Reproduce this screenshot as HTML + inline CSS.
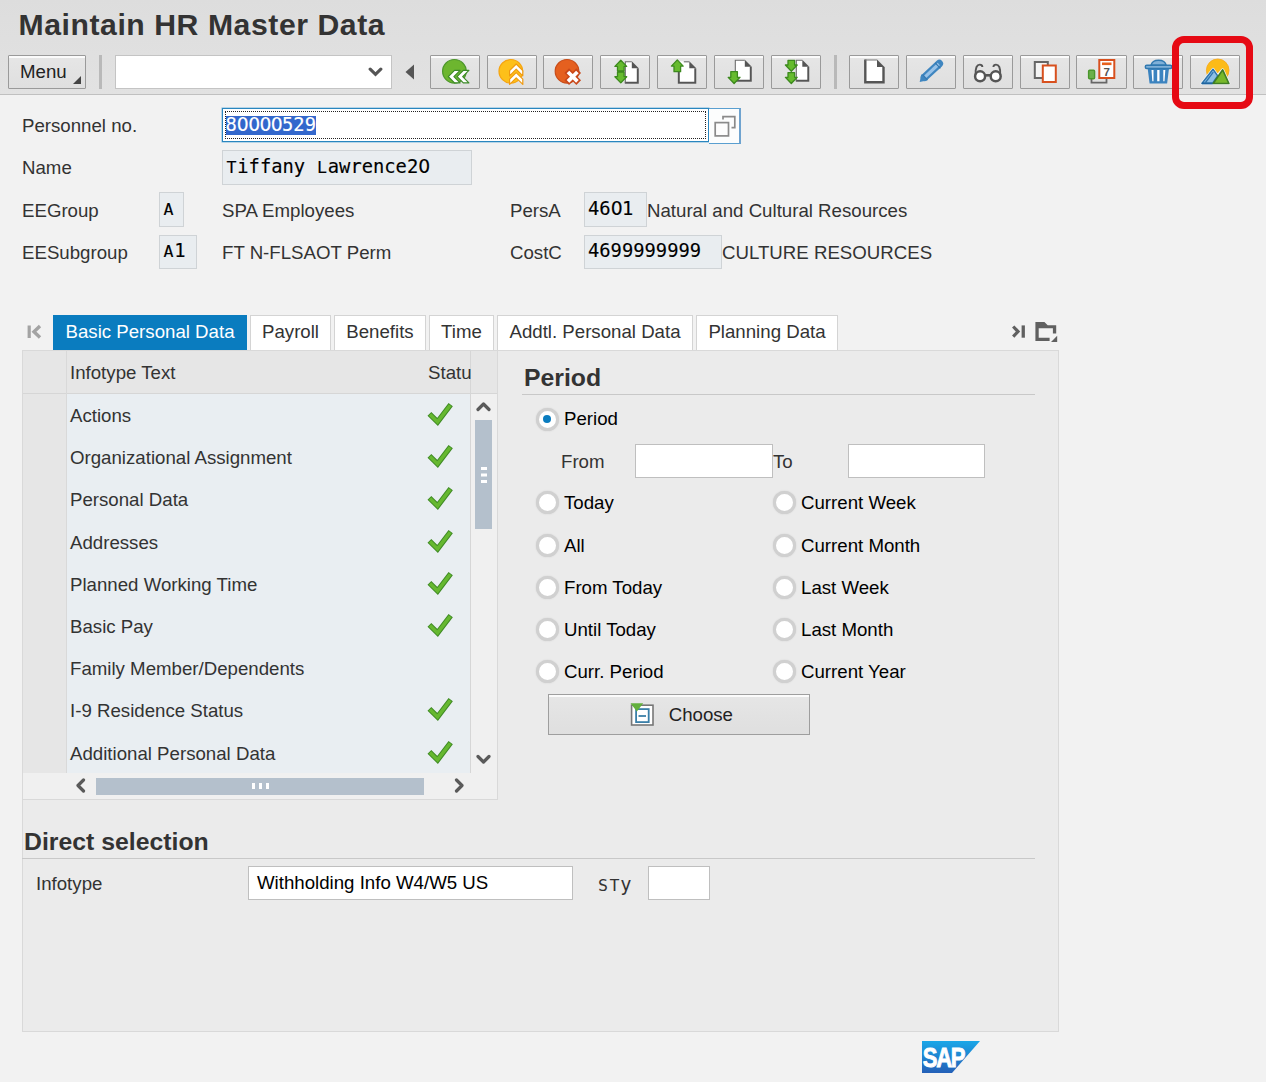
<!DOCTYPE html>
<html lang="en">
<head>
<meta charset="utf-8">
<title>Maintain HR Master Data</title>
<style>
*{box-sizing:border-box;margin:0;padding:0}
html,body{width:1266px;height:1082px;overflow:hidden}
body{background:#f2f2f2;font-family:"Liberation Sans",Arial,sans-serif;font-size:18.67px;color:#333;position:relative}
.abs{position:absolute}
#hdr{left:0;top:0;width:1266px;height:95px;background:linear-gradient(#dddddd,#e2e2e2);border-bottom:1px solid #c0c0c0}
#title{left:18.5px;top:7px;letter-spacing:0.55px;font-size:30.2px;font-weight:bold;color:#333;white-space:nowrap;line-height:36px}
.tb{position:absolute;top:55px;height:34px;width:50px;border:1px solid #9a9a9a;background:linear-gradient(#e6e6e6,#dfdfdf);border-radius:1px;box-shadow:inset 0 2px 0 #fbfbfb}
.tb svg{position:absolute;left:0;top:0;width:48px;height:32px}
.sep{position:absolute;top:55px;height:34px;width:3px;background:#b9b9b9}
.lbl{position:absolute;white-space:nowrap;line-height:22px;color:#333}
.mono{font-family:"DejaVu Sans Mono","Liberation Mono",monospace;font-size:18.8px;color:#000;-webkit-text-stroke:0.14px currentColor}
.z{font-family:"DejaVu Sans",sans-serif;letter-spacing:-0.64px}
.c{font-size:16.6px;margin-left:.6px;letter-spacing:.72px}
.ro{position:absolute;background:#e9edf0;border:1px solid #cfd3d6;white-space:nowrap;overflow:hidden}
.ro>span{position:absolute;left:4px;top:3px;line-height:22px}
.inp{position:absolute;background:#fff;border:1px solid #bfbfbf}
.tab{position:absolute;top:315px;height:35px;background:#fff;border:1px solid #d4d4d4;border-bottom:none;text-align:center;line-height:31px;color:#333;white-space:nowrap}
.tab.act{background:#0a7cbf;border-color:#0a7cbf;color:#fff}
.row{position:absolute;margin-top:1px;left:70px;white-space:nowrap;line-height:22px;color:#333}
.chk{position:absolute;left:426px;width:30px;height:26px}
.radio{position:absolute;width:23px;height:23px;margin:-0.5px 0 0 -0.5px;border-radius:50%;background:#fff;border:3px solid #d0d0d0;box-shadow:0 0 1.5px #c8c8c8}
.rl{position:absolute;margin-top:1px;white-space:nowrap;line-height:22px;color:#000}
h2{position:absolute;margin-top:1px;font-size:24.8px;font-weight:bold;color:#333;line-height:28px;white-space:nowrap}
#fields .lbl,#table .lbl,#period .lbl{margin-top:1px}
</style>
</head>
<body>
<div id="hdr" class="abs"></div>
<div id="title" class="abs">Maintain HR Master Data</div>

<!-- toolbar -->
<div id="toolbar">
<div class="tb" style="left:8px;width:78px"><span class="abs" style="left:11px;top:5px;line-height:22px;color:#222;font-size:18.67px">Menu</span><svg style="left:63px;top:19px;width:10px;height:10px" viewBox="0 0 10 10"><path d="M9 1V9H1Z" fill="#444"/></svg></div>
<div class="sep" style="left:99px"></div>
<div class="inp" style="left:115px;top:55px;width:277px;height:34px;border-color:#c4c4c4"><svg class="abs" style="left:252px;top:11px;width:15px;height:10px" viewBox="0 0 15 10"><path d="M2.200 2.200L7.500 7.300L12.800 2.200" fill="none" stroke="#555" stroke-width="3.200" stroke-linecap="round"/></svg></div>
<svg class="abs" style="left:404px;top:63px;width:11px;height:18px" viewBox="0 0 11 18"><path d="M10 1.500V16.500L1.500 9Z" fill="#555"/></svg>

<div class="tb" style="left:430px"><svg viewBox="0 0 48 32"><circle cx="23.4" cy="15.3" r="11.8" fill="#6db62f" stroke="#4d962c" stroke-width="1.2"/><path d="M17.3 20.6L23.5 14.400000000000002H29.1L22.9 20.6L29.1 26.8H23.5ZM26.1 20.6L32.300000000000004 14.400000000000002H37.900000000000006L31.700000000000003 20.6L37.900000000000006 26.8H32.300000000000004Z" fill="#fff" stroke="#3d8a28" stroke-width="1.2" stroke-linejoin="round"/></svg></div>
<div class="tb" style="left:487px"><svg viewBox="0 0 48 32"><circle cx="22.8" cy="15.3" r="11.8" fill="#fdc01a" stroke="#f5a411" stroke-width="1.2"/><path d="M28.2 8.0L34.8 14.6V19.8L28.2 13.2L21.6 19.8V14.6ZM28.2 16.6L34.8 23.200000000000003V28.400000000000002L28.2 21.8L21.6 28.400000000000002V23.200000000000003Z" fill="#fff" stroke="#f09a10" stroke-width="1.2" stroke-linejoin="round"/></svg></div>
<div class="tb" style="left:543px"><svg viewBox="0 0 48 32"><circle cx="23" cy="15.300" r="11.800" fill="#e5601f" stroke="#c84c18" stroke-width="1.200"/><path d="M22.700 14.700L34.700 26.700M34.700 14.700L22.700 26.700" fill="none" stroke="#c9481a" stroke-width="6.600"/><path d="M24 16L33.400 25.400M33.400 16L24 25.400" fill="none" stroke="#fff" stroke-width="3.700"/></svg></div>
<div class="tb" style="left:600px"><svg viewBox="0 0 48 32"><g transform="translate(0.800 0.300)"><path d="M23 5H30L37 12V27.5H23Z" fill="#fff"/><path d="M30 5L37 12H30Z" fill="#555"/><path d="M36 12V26.5H23" fill="none" stroke="#555" stroke-width="2"/><path d="M23.5 26.5V5.5H30" fill="none" stroke="#6a6a6a" stroke-width="1.1"/><path d="M19 3.9L24.9 10.1H22.3V14.7H15.7V10.1H13.1ZM19 26.6L24.9 20.400000000000002H22.3V15.800000000000002H15.7V20.400000000000002H13.1Z" fill="#66bb2e" stroke="#3d8a1e" stroke-width="1.3" stroke-linejoin="round"/></g></svg></div>
<div class="tb" style="left:657px"><svg viewBox="0 0 48 32"><g transform="translate(0.800 0.300)"><path d="M19 5H30.5L37.5 12V27.5H19Z" fill="#fff"/><path d="M30.5 5L37.5 12H30.5Z" fill="#555"/><path d="M36.5 12V26.5H20V14" fill="none" stroke="#555" stroke-width="2"/><path d="M25 5.5H30.5" fill="none" stroke="#6a6a6a" stroke-width="1.1"/><path d="M18.5 3.6L24.4 9.8H21.8V15.4H15.2V9.8H12.6Z" fill="#66bb2e" stroke="#3d8a1e" stroke-width="1.3" stroke-linejoin="round"/></g></svg></div>
<div class="tb" style="left:714px"><svg viewBox="0 0 48 32"><g transform="translate(0.800 0.300)"><path d="M19 3.5H29L36 10.5V25.5H19Z" fill="#fff"/><path d="M29 3.5L36 10.5H29Z" fill="#555"/><path d="M35 10.5V24.5H19" fill="none" stroke="#555" stroke-width="2"/><path d="M19.5 24.5V4.0H29" fill="none" stroke="#6a6a6a" stroke-width="1.1"/><path d="M18.3 27.2L24.200000000000003 21.0H21.6V15.4H15.0V21.0H12.4Z" fill="#66bb2e" stroke="#3d8a1e" stroke-width="1.3" stroke-linejoin="round"/></g></svg></div>
<div class="tb" style="left:771px"><svg viewBox="0 0 48 32"><g transform="translate(0.800 0.300)"><path d="M23 3.5H29.5L36.5 10.5V25.5H23Z" fill="#fff"/><path d="M29.5 3.5L36.5 10.5H29.5Z" fill="#555"/><path d="M35.5 10.5V24.5H23" fill="none" stroke="#555" stroke-width="2"/><path d="M23.5 24.5V4.0H29.5" fill="none" stroke="#6a6a6a" stroke-width="1.1"/><path d="M18.5 14.9L24.4 8.7H21.8V4.1H15.2V8.7H12.6ZM18.5 27.2L24.4 21.0H21.8V16.4H15.2V21.0H12.6Z" fill="#66bb2e" stroke="#3d8a1e" stroke-width="1.3" stroke-linejoin="round"/></g></svg></div>
<div class="sep" style="left:834px"></div>
<div class="tb" style="left:849px"><svg viewBox="0 0 48 32"><path d="M15 4H27L34 11V27H15Z" fill="#fff"/><path d="M27 3.500L34.500 11H27Z" fill="#555"/><path d="M15.300 3.500V26.300H33.500V11" fill="none" stroke="#555" stroke-width="2.400"/><path d="M15 4H27" stroke="#777" stroke-width="1"/></svg></div>
<div class="tb" style="left:906px"><svg viewBox="0 0 48 32"><path d="M17.600 21.300L32.300 7.600" fill="none" stroke="#3f86c0" stroke-width="7.600" stroke-linecap="round"/><path d="M12.700 26L14.300 18.300L20.700 24.300Z" fill="#3f86c0"/><path d="M17.800 21.100L31.800 8" fill="none" stroke="#98c2e8" stroke-width="3.200"/><path d="M15.600 18.700L20.400 23.800M28.200 6.900L33.400 12.300" fill="none" stroke="#3478b0" stroke-width="1.200"/></svg></div>
<div class="tb" style="left:963px"><svg viewBox="0 0 48 32"><circle cx="16.100" cy="20.300" r="5" fill="#fff" stroke="#555" stroke-width="2.500"/><circle cx="31.700" cy="20.300" r="5" fill="#fff" stroke="#555" stroke-width="2.500"/><path d="M11.600 19C11.200 11.500 13 8.600 15.800 8.600C17.600 8.600 18.300 9.600 18.400 11M36.200 19C36.600 11.500 34.800 8.600 32 8.600C30.200 8.600 29.500 9.600 29.400 11" fill="none" stroke="#555" stroke-width="1.900"/><path d="M21.500 19.300H26.500" fill="none" stroke="#555" stroke-width="2.600"/></svg></div>
<div class="tb" style="left:1020px"><svg viewBox="0 0 48 32"><rect x="13.800" y="6" width="13" height="16" fill="#f4f4f4" stroke="#666" stroke-width="2"/><rect x="21.800" y="9.500" width="13" height="16.500" fill="#fff" stroke="#d8501e" stroke-width="2"/></svg></div>
<div class="tb" style="left:1076px;width:51px"><svg viewBox="0 0 48 32"><path d="M14.500 23V26.700H29.500V22" fill="none" stroke="#666" stroke-width="1.800"/><rect x="22.300" y="4" width="15" height="18" fill="#fff" stroke="#d8501e" stroke-width="2"/><rect x="25" y="6.500" width="9.500" height="2.600" fill="#e8601c"/><text x="29.800" y="19.800" font-size="11.500" font-weight="bold" text-anchor="middle" fill="#555" font-family="Liberation Sans">7</text><rect x="11.600" y="14.300" width="6" height="8.400" rx="1" fill="#6ab04a" stroke="#4a962c" stroke-width="1.400"/></svg></div>
<div class="tb" style="left:1133px"><svg viewBox="0 0 48 32"><path d="M13.700 12.500H35L33.100 27.600H15.600Z" fill="#3b83bf"/><path d="M17.500 14H19.500V25.300H18.300ZM23.200 14H25.500V25.300H23.200ZM29.300 14H31.300L30.500 25.300H29.300Z" fill="#fff"/><path d="M17 9.200C18.500 2.500 30.700 2.500 32.200 9.200Z" fill="#7fb0d8" stroke="#2f78b0" stroke-width="1.400"/><rect x="11.300" y="9.200" width="26.500" height="3.300" rx="1.500" fill="#7fb0d8" stroke="#2f78b0" stroke-width="1.400"/></svg></div>
<div class="tb" style="left:1190px"><svg viewBox="0 0 48 32"><circle cx="26.700" cy="14.300" r="11.300" fill="#fcbb18" stroke="#f7a81a" stroke-width="0.800"/><path d="M10.900 27.500L22 13.300L26.600 19.800L31.700 13.800L37.900 27.500Z" fill="none" stroke="#f4f4f4" stroke-width="3" stroke-linejoin="round"/><path d="M10.900 27.500L22 13.300L26.700 19.900L21.500 27.500Z" fill="#8ec0e6" stroke="#2e74ad" stroke-width="1.500" stroke-linejoin="round"/><path d="M14.500 26.500L22.300 16.200" stroke="#2e74ad" stroke-width="1.300"/><path d="M10.900 27.300H21.500" stroke="#1f65a0" stroke-width="1.800"/><path d="M22.200 27.500L31.700 13.800L37.900 27.500Z" fill="#78b82a" stroke="#3f7d24" stroke-width="1.600" stroke-linejoin="round"/></svg></div>
<div class="abs" style="left:1172px;top:36px;width:81px;height:72.5px;border:7px solid #e60a14;border-radius:12px"></div>
</div>

<!-- header fields -->
<div id="fields">
<div class="lbl" style="left:22px;top:114px">Personnel no.</div>
<div class="inp" style="left:222px;top:108px;width:487px;height:34px;border:1px solid #2a86bf;box-shadow:0 0 0 0.5px #7db8dc"><div class="abs" style="left:2px;top:2px;right:2px;bottom:2px;border:1px dotted #222"></div><span class="abs mono" style="left:2.5px;top:7px;height:18.5px;line-height:17px;background:#3267cc;color:#fff">8<span class="z">0</span><span class="z">0</span><span class="z">0</span><span class="z">0</span>529</span></div>
<div class="abs" style="left:709px;top:108px;width:32px;height:36px;border:1.500px solid #5a9fd0;border-left:none;border-right:2px solid #6fa3cf;background:#fcfdfd"><svg class="abs" style="left:5px;top:6px;width:24px;height:24px" viewBox="0 0 24 24"><path d="M9 4.500V1.600H20.800V12.600H17.500" fill="none" stroke="#8a8a8a" stroke-width="1.700"/><rect x="1.200" y="7.600" width="13.300" height="13.300" fill="#fdfdfd" stroke="#8a8a8a" stroke-width="1.700"/></svg></div>

<div class="lbl" style="left:22px;top:156px">Name</div>
<div class="ro" style="left:222px;top:150px;width:250px;height:35px"><span class="mono" style="top:5px;left:3px"><span class="c">T</span>iffany <span class="c">L</span>awrence2<span class="z">0</span></span></div>

<div class="lbl" style="left:22px;top:199px">EEGroup</div>
<div class="ro" style="left:159px;top:192px;width:25px;height:35px"><span class="mono" style="top:5px;left:3px"><span class="c">A</span></span></div>
<div class="lbl" style="left:222px;top:199px">SPA Employees</div>
<div class="lbl" style="left:510px;top:199px">PersA</div>
<div class="ro" style="left:584px;top:192px;width:63px;height:35px"><span class="mono" style="top:5px;left:3px">46<span class="z">0</span>1</span></div>
<div class="lbl" style="left:647px;top:199px">Natural and Cultural Resources</div>

<div class="lbl" style="left:22px;top:241px">EESubgroup</div>
<div class="ro" style="left:159px;top:235px;width:38px;height:34px"><span class="mono" style="top:4px;left:3px"><span class="c">A</span>1</span></div>
<div class="lbl" style="left:222px;top:241px">FT N-FLSAOT Perm</div>
<div class="lbl" style="left:510px;top:241px">CostC</div>
<div class="ro" style="left:584px;top:235px;width:138px;height:34px"><span class="mono" style="top:4px;left:3px">4699999999</span></div>
<div class="lbl" style="left:722px;top:241px">CULTURE RESOURCES</div>
</div>

<!-- tabstrip -->
<div id="tabs">
<svg class="abs" style="left:27px;top:324px;width:15px;height:15px" viewBox="0 0 15 15"><path d="M2.200 1.500v12.500" stroke="#a3a3a3" stroke-width="3.200" fill="none"/><path d="M13 2L7 7.700L13 13.400" stroke="#a3a3a3" stroke-width="3.400" fill="none"/></svg>
<div class="tab act" style="left:53px;width:194px">Basic Personal Data</div>
<div class="tab" style="left:250px;width:81px">Payroll</div>
<div class="tab" style="left:334px;width:92px">Benefits</div>
<div class="tab" style="left:429px;width:65px">Time</div>
<div class="tab" style="left:497px;width:196px">Addtl. Personal Data</div>
<div class="tab" style="left:696px;width:142px">Planning Data</div>
<svg class="abs" style="left:1010px;top:324px;width:16px;height:15px" viewBox="0 0 16 15"><path d="M13.250 1.400v12.300" stroke="#606060" stroke-width="3.300" fill="none"/><path d="M3.200 2.500L8 7.550L3.200 12.600" stroke="#606060" stroke-width="3.200" fill="none"/></svg>
<svg class="abs" style="left:1034px;top:321px;width:25px;height:22px" viewBox="0 0 25 22"><path d="M1.400 1H10.400L13.700 4.300H22.200V12.400H18.900V7.200H4.700V16.700H15.600V20H1.400Z" fill="#606060"/><path d="M23.200 14.800V21H17Z" fill="#606060"/></svg>
</div>

<!-- panel -->
<div id="panel" class="abs" style="left:22px;top:350px;width:1037px;height:682px;background:#ebebeb;border:1px solid #d9d9d9"></div>

<!-- table -->
<div id="table">
<div class="abs" style="left:22px;top:350px;width:476px;height:450px;background:#f0f0f0;border:1px solid #d9d9d9"></div>
<div class="abs" style="left:23px;top:351px;width:474px;height:43px;background:#e6e6e6;border-bottom:1px solid #d6d6d6"></div>
<div class="abs" style="left:23px;top:394px;width:43px;height:379px;background:#e6e6e6"></div>
<div class="abs" style="left:66px;top:351px;width:1px;height:422px;background:#d9d9d9"></div>
<div class="abs" style="left:67px;top:394px;width:403px;height:379px;background:#e9eef2"></div>
<div class="abs" style="left:470px;top:351px;width:1px;height:422px;background:#d6d6d6"></div>
<div class="lbl" style="left:70px;top:361px">Infotype Text</div>
<div class="lbl" style="left:428px;top:361px;width:43px;overflow:hidden">Status</div>
<div class="row" style="top:404px">Actions</div>
<svg class="chk" style="top:401px" viewBox="0 0 30 26"><path d="M3.400 12.800L11.600 20.900L24.700 3.600" fill="none" stroke="#3f8a25" stroke-width="5.400" stroke-linejoin="miter"/><path d="M4 13.500L11.500 20.900L24.200 4.200" fill="none" stroke="#66b830" stroke-width="3.400"/></svg>
<div class="row" style="top:446px">Organizational Assignment</div>
<svg class="chk" style="top:443px" viewBox="0 0 30 26"><path d="M3.400 12.800L11.600 20.900L24.700 3.600" fill="none" stroke="#3f8a25" stroke-width="5.400" stroke-linejoin="miter"/><path d="M4 13.500L11.500 20.900L24.200 4.200" fill="none" stroke="#66b830" stroke-width="3.400"/></svg>
<div class="row" style="top:488px">Personal Data</div>
<svg class="chk" style="top:485px" viewBox="0 0 30 26"><path d="M3.400 12.800L11.600 20.900L24.700 3.600" fill="none" stroke="#3f8a25" stroke-width="5.400" stroke-linejoin="miter"/><path d="M4 13.500L11.500 20.900L24.200 4.200" fill="none" stroke="#66b830" stroke-width="3.400"/></svg>
<div class="row" style="top:531px">Addresses</div>
<svg class="chk" style="top:528px" viewBox="0 0 30 26"><path d="M3.400 12.800L11.600 20.900L24.700 3.600" fill="none" stroke="#3f8a25" stroke-width="5.400" stroke-linejoin="miter"/><path d="M4 13.500L11.500 20.900L24.200 4.200" fill="none" stroke="#66b830" stroke-width="3.400"/></svg>
<div class="row" style="top:573px">Planned Working Time</div>
<svg class="chk" style="top:570px" viewBox="0 0 30 26"><path d="M3.400 12.800L11.600 20.900L24.700 3.600" fill="none" stroke="#3f8a25" stroke-width="5.400" stroke-linejoin="miter"/><path d="M4 13.500L11.500 20.900L24.200 4.200" fill="none" stroke="#66b830" stroke-width="3.400"/></svg>
<div class="row" style="top:615px">Basic Pay</div>
<svg class="chk" style="top:612px" viewBox="0 0 30 26"><path d="M3.400 12.800L11.600 20.900L24.700 3.600" fill="none" stroke="#3f8a25" stroke-width="5.400" stroke-linejoin="miter"/><path d="M4 13.500L11.500 20.900L24.200 4.200" fill="none" stroke="#66b830" stroke-width="3.400"/></svg>
<div class="row" style="top:657px">Family Member/Dependents</div>
<div class="row" style="top:699px">I-9 Residence Status</div>
<svg class="chk" style="top:696px" viewBox="0 0 30 26"><path d="M3.400 12.800L11.600 20.900L24.700 3.600" fill="none" stroke="#3f8a25" stroke-width="5.400" stroke-linejoin="miter"/><path d="M4 13.500L11.500 20.900L24.200 4.200" fill="none" stroke="#66b830" stroke-width="3.400"/></svg>
<div class="row" style="top:742px">Additional Personal Data</div>
<svg class="chk" style="top:739px" viewBox="0 0 30 26"><path d="M3.400 12.800L11.600 20.900L24.700 3.600" fill="none" stroke="#3f8a25" stroke-width="5.400" stroke-linejoin="miter"/><path d="M4 13.500L11.500 20.900L24.200 4.200" fill="none" stroke="#66b830" stroke-width="3.400"/></svg>
<svg class="abs" style="left:476px;top:400.700px;width:15px;height:11px" viewBox="0 0 15 11"><path d="M2 8.500L7.500 3L13 8.500" fill="none" stroke="#5a5a5a" stroke-width="3.200" stroke-linecap="round" stroke-linejoin="round"/></svg>
<div class="abs" style="left:475px;top:420px;width:17px;height:109px;background:#b4c0cc"></div>
<div class="abs" style="left:481px;top:467px;width:6px;height:3px;background:#fff;box-shadow:0 6.5px 0 #fff,0 13px 0 #fff"></div>
<svg class="abs" style="left:476px;top:754px;width:15px;height:11px" viewBox="0 0 15 11"><path d="M2 2.500L7.500 8L13 2.500" fill="none" stroke="#5a5a5a" stroke-width="3.200" stroke-linecap="round" stroke-linejoin="round"/></svg>
<svg class="abs" style="left:75px;top:778px;width:11px;height:15px" viewBox="0 0 11 15"><path d="M8.500 2L3 7.500L8.500 13" fill="none" stroke="#5a5a5a" stroke-width="3.200" stroke-linecap="round" stroke-linejoin="round"/></svg>
<div class="abs" style="left:96px;top:778px;width:328px;height:17px;background:#b4c0cc"></div>
<div class="abs" style="left:252px;top:783px;width:3px;height:6px;background:#fff;box-shadow:7px 0 0 #fff,14px 0 0 #fff"></div>
<svg class="abs" style="left:454px;top:778px;width:11px;height:15px" viewBox="0 0 11 15"><path d="M2.500 2L8 7.500L2.500 13" fill="none" stroke="#5a5a5a" stroke-width="3.200" stroke-linecap="round" stroke-linejoin="round"/></svg>
</div>

<!-- period -->
<div id="period">
<h2 style="left:524px;top:363px">Period</h2>
<div class="abs" style="left:522px;top:394px;width:513px;height:1px;background:#c8c8c8"></div>
<div class="radio" style="left:536px;top:408px"><div class="abs" style="left:4.300px;top:4.300px;width:8.400px;height:8.400px;border-radius:50%;background:#0a7cbf"></div></div>
<div class="rl" style="left:564px;top:407px">Period</div>
<div class="lbl" style="left:561px;top:450px">From</div>
<div class="inp" style="left:635px;top:444px;width:138px;height:34px"></div>
<div class="lbl" style="left:773px;top:450px">To</div>
<div class="inp" style="left:848px;top:444px;width:137px;height:34px"></div>
<div class="radio" style="left:536px;top:491px"></div>
<div class="rl" style="left:564px;top:491px">Today</div>
<div class="radio" style="left:536px;top:534px"></div>
<div class="rl" style="left:564px;top:534px">All</div>
<div class="radio" style="left:536px;top:576px"></div>
<div class="rl" style="left:564px;top:576px">From Today</div>
<div class="radio" style="left:536px;top:618px"></div>
<div class="rl" style="left:564px;top:618px">Until Today</div>
<div class="radio" style="left:536px;top:660px"></div>
<div class="rl" style="left:564px;top:660px">Curr. Period</div>
<div class="radio" style="left:773px;top:491px"></div>
<div class="rl" style="left:801px;top:491px">Current Week</div>
<div class="radio" style="left:773px;top:534px"></div>
<div class="rl" style="left:801px;top:534px">Current Month</div>
<div class="radio" style="left:773px;top:576px"></div>
<div class="rl" style="left:801px;top:576px">Last Week</div>
<div class="radio" style="left:773px;top:618px"></div>
<div class="rl" style="left:801px;top:618px">Last Month</div>
<div class="radio" style="left:773px;top:660px"></div>
<div class="rl" style="left:801px;top:660px">Current Year</div>
<div class="abs" style="left:548px;top:694px;width:262px;height:41px;border:1px solid #9e9e9e;background:linear-gradient(#e6e6e6,#dfdfdf);box-shadow:inset 0 2px 0 #fbfbfb"><svg class="abs" style="left:80px;top:8px;width:26px;height:26px" viewBox="0 0 26 26"><rect x="2.600" y="2.200" width="21.400" height="19.800" fill="#fff" stroke="#777" stroke-width="1.600"/><rect x="7.100" y="6.100" width="12.600" height="13" fill="#fff" stroke="#3a7fa8" stroke-width="1.800"/><path d="M9.500 13h7.500" stroke="#3a7fa8" stroke-width="1.800"/><path d="M1.500 0.300h12.700l-6.300 8.300z" fill="#62b03c"/></svg><span class="abs" style="left:119.700px;top:9.400px;line-height:22px;color:#222">Choose</span></div>
</div>

<!-- direct selection -->
<div id="direct">
<h2 style="left:24px;top:827px">Direct selection</h2>
<div class="abs" style="left:22px;top:858px;width:1013px;height:1px;background:#c8c8c8"></div>
<div class="lbl" style="left:36px;top:873px">Infotype</div>
<div class="inp" style="left:248px;top:866px;width:325px;height:34px"><span class="abs" style="left:8px;top:5px;line-height:22px;color:#000;white-space:nowrap">Withholding Info W4/W5 US</span></div>
<div class="lbl mono" style="left:597.500px;top:873.500px;color:#333;font-size:18.600px;-webkit-text-stroke:0"><span class="c" style="font-size:16.600px">S</span><span class="c" style="font-size:16.600px">T</span>y</div>
<div class="inp" style="left:648px;top:866px;width:62px;height:34px"></div>
</div>

<!-- sap logo -->
<div id="logo"><svg class="abs" style="left:922px;top:1041px;width:58px;height:32px" viewBox="0 0 58 32"><defs><linearGradient id="sg" x1="0" y1="0" x2="0" y2="1"><stop offset="0" stop-color="#1aa7e8"/><stop offset="1" stop-color="#2460b8"/></linearGradient></defs><path d="M0 0H58L30 32H0Z" fill="url(#sg)"/><text transform="translate(0.800,26.100) scale(0.775,1)" font-family="Liberation Sans, sans-serif" font-weight="bold" font-size="28.500" fill="#fff" stroke="#fff" stroke-width="0.900" style="letter-spacing:-1.800px">SAP</text></svg></div>
</body>
</html>
